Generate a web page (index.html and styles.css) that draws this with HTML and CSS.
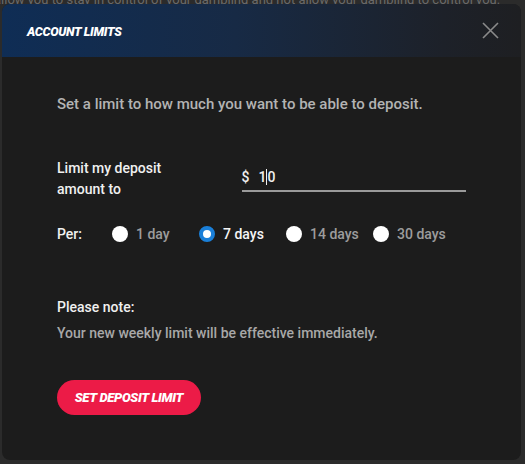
FILE: index.html
```html
<!DOCTYPE html>
<html lang="en">
<head>
    <meta charset="UTF-8">
    <meta name="viewport" content="width=device-width, initial-scale=1.0">
    <title>Account limits</title>

    <link rel="stylesheet" href="styles.css">
</head>
<body>
    <div class="page">
        <p class="page-text">allow you to stay in control of your gambling and not allow your gambling to control you.</p>
    </div>

    <div class="modal">
        <div class="modal-header">
            <p class="modal-title">ACCOUNT LIMITS</p>
            <button class="close-button" aria-label="close">
                <svg width="17" height="17" viewBox="0 0 17 17"><path d="M1 1L16 16M16 1L1 16" stroke="#8a8a8a" stroke-width="1.6" fill="none"/></svg>
            </button>
        </div>

        <div class="modal-body">
            <p class="intro">Set a limit to how much you want to be able to deposit.</p>

            <div class="amount-row">
                <p class="label">Limit my deposit<br>amount to</p>
                <div class="amount-input">
                    <span class="currency">$</span>
                    <span class="amount-value">1<span class="caret"></span>0</span>
                </div>
            </div>

            <div class="per-row">
                <span class="label per-label">Per:</span>
                <label class="option"><span class="radio"></span>1 day</label>
                <label class="option option-selected"><span class="radio radio-on"></span>7 days</label>
                <label class="option"><span class="radio"></span>14 days</label>
                <label class="option"><span class="radio"></span>30 days</label>
            </div>

            <p class="label note-title">Please note:</p>
            <p class="note">Your new weekly limit will be effective immediately.</p>

            <button class="submit-button">SET DEPOSIT LIMIT</button>
        </div>
    </div>
</body>
</html>
```

FILE: styles.css
```css
body{
    margin: 0;
    background-color: #2b2b2b;
    font-family: Roboto, "Liberation Sans", Arial, sans-serif;
    height: 464px;
    overflow: hidden;
    position: relative;
}
p{
    margin: 0;
}
.page-text{
    color: #6a6a6a;
    font-size: 13px;
    margin-top: -8px;
    margin-left: -6px;
    white-space: nowrap;
}
.modal{
    position: absolute;
    left: 2px;
    top: 4px;
    width: 519px;
    height: 456px;
    background-color: #1c1c1c;
    border-radius: 8px;
    overflow: hidden;
}
.modal-header{
    height: 53px;
    display: flex;
    align-items: center;
    justify-content: space-between;
    padding: 0 22px 0 25px;
    background: linear-gradient(90deg, #0f2d55 0%, #172a45 45%, #1d2129 85%, #1e1f22 100%);
}
.modal-title{
    color: white;
    font-size: 12.5px;
    font-weight: 900;
    font-style: italic;
    letter-spacing: -0.3px;
    padding-top: 1px;
}
.close-button{
    background: transparent;
    border: none;
    padding: 0;
    cursor: pointer;
    display: flex;
}
.modal-body{
    padding: 38px 55px 0 55px;
}
.intro{
    color: #b3b3b3;
    font-size: 15px;
    font-weight: 500;
}
.label{
    color: #f0f0f0;
    font-size: 14px;
    font-weight: 500;
}
.amount-row{
    display: flex;
    margin-top: 45px;
}
.amount-row .label{
    line-height: 21px;
    width: 185px;
}
.amount-input{
    width: 225px;
    height: 27px;
    margin-top: 4px;
    border-bottom: 2px solid #9a9a9a;
    color: #f0f0f0;
    font-size: 14px;
    font-weight: 500;
    display: flex;
    align-items: center;
    padding-top: 1px;
}
.currency{
    margin-right: 9px;
}
.amount-value{
    display: flex;
    align-items: center;
}
.caret{
    display: inline-block;
    width: 1px;
    height: 16px;
    background-color: #f0f0f0;
}
.per-row{
    display: flex;
    align-items: center;
    margin-top: 26px;
}
.per-label{
    width: 55px;
}
.option{
    display: flex;
    align-items: center;
    width: 87px;
    white-space: nowrap;
    color: #9c9c9c;
    font-size: 14px;
    font-weight: 500;
}
.option-selected{
    color: #f5f5f5;
}
.radio{
    flex: none;
    width: 16px;
    height: 16px;
    border-radius: 50%;
    background-color: white;
    margin-right: 8px;
    box-sizing: border-box;
}
.radio-on{
    border: 4px solid #1a7fd8;
}
.note-title{
    margin-top: 57px;
}
.note{
    color: #a8a8a8;
    font-size: 14px;
    font-weight: 500;
    margin-top: 10px;
}
.submit-button{
    margin-top: 39px;
    background-color: #ec1b47;
    color: white;
    border: none;
    border-radius: 18px;
    height: 35px;
    width: 144px;
    font-family: Roboto, "Liberation Sans", Arial, sans-serif;
    font-size: 13px;
    font-weight: 900;
    font-style: italic;
    letter-spacing: -0.3px;
    cursor: pointer;
}
```
